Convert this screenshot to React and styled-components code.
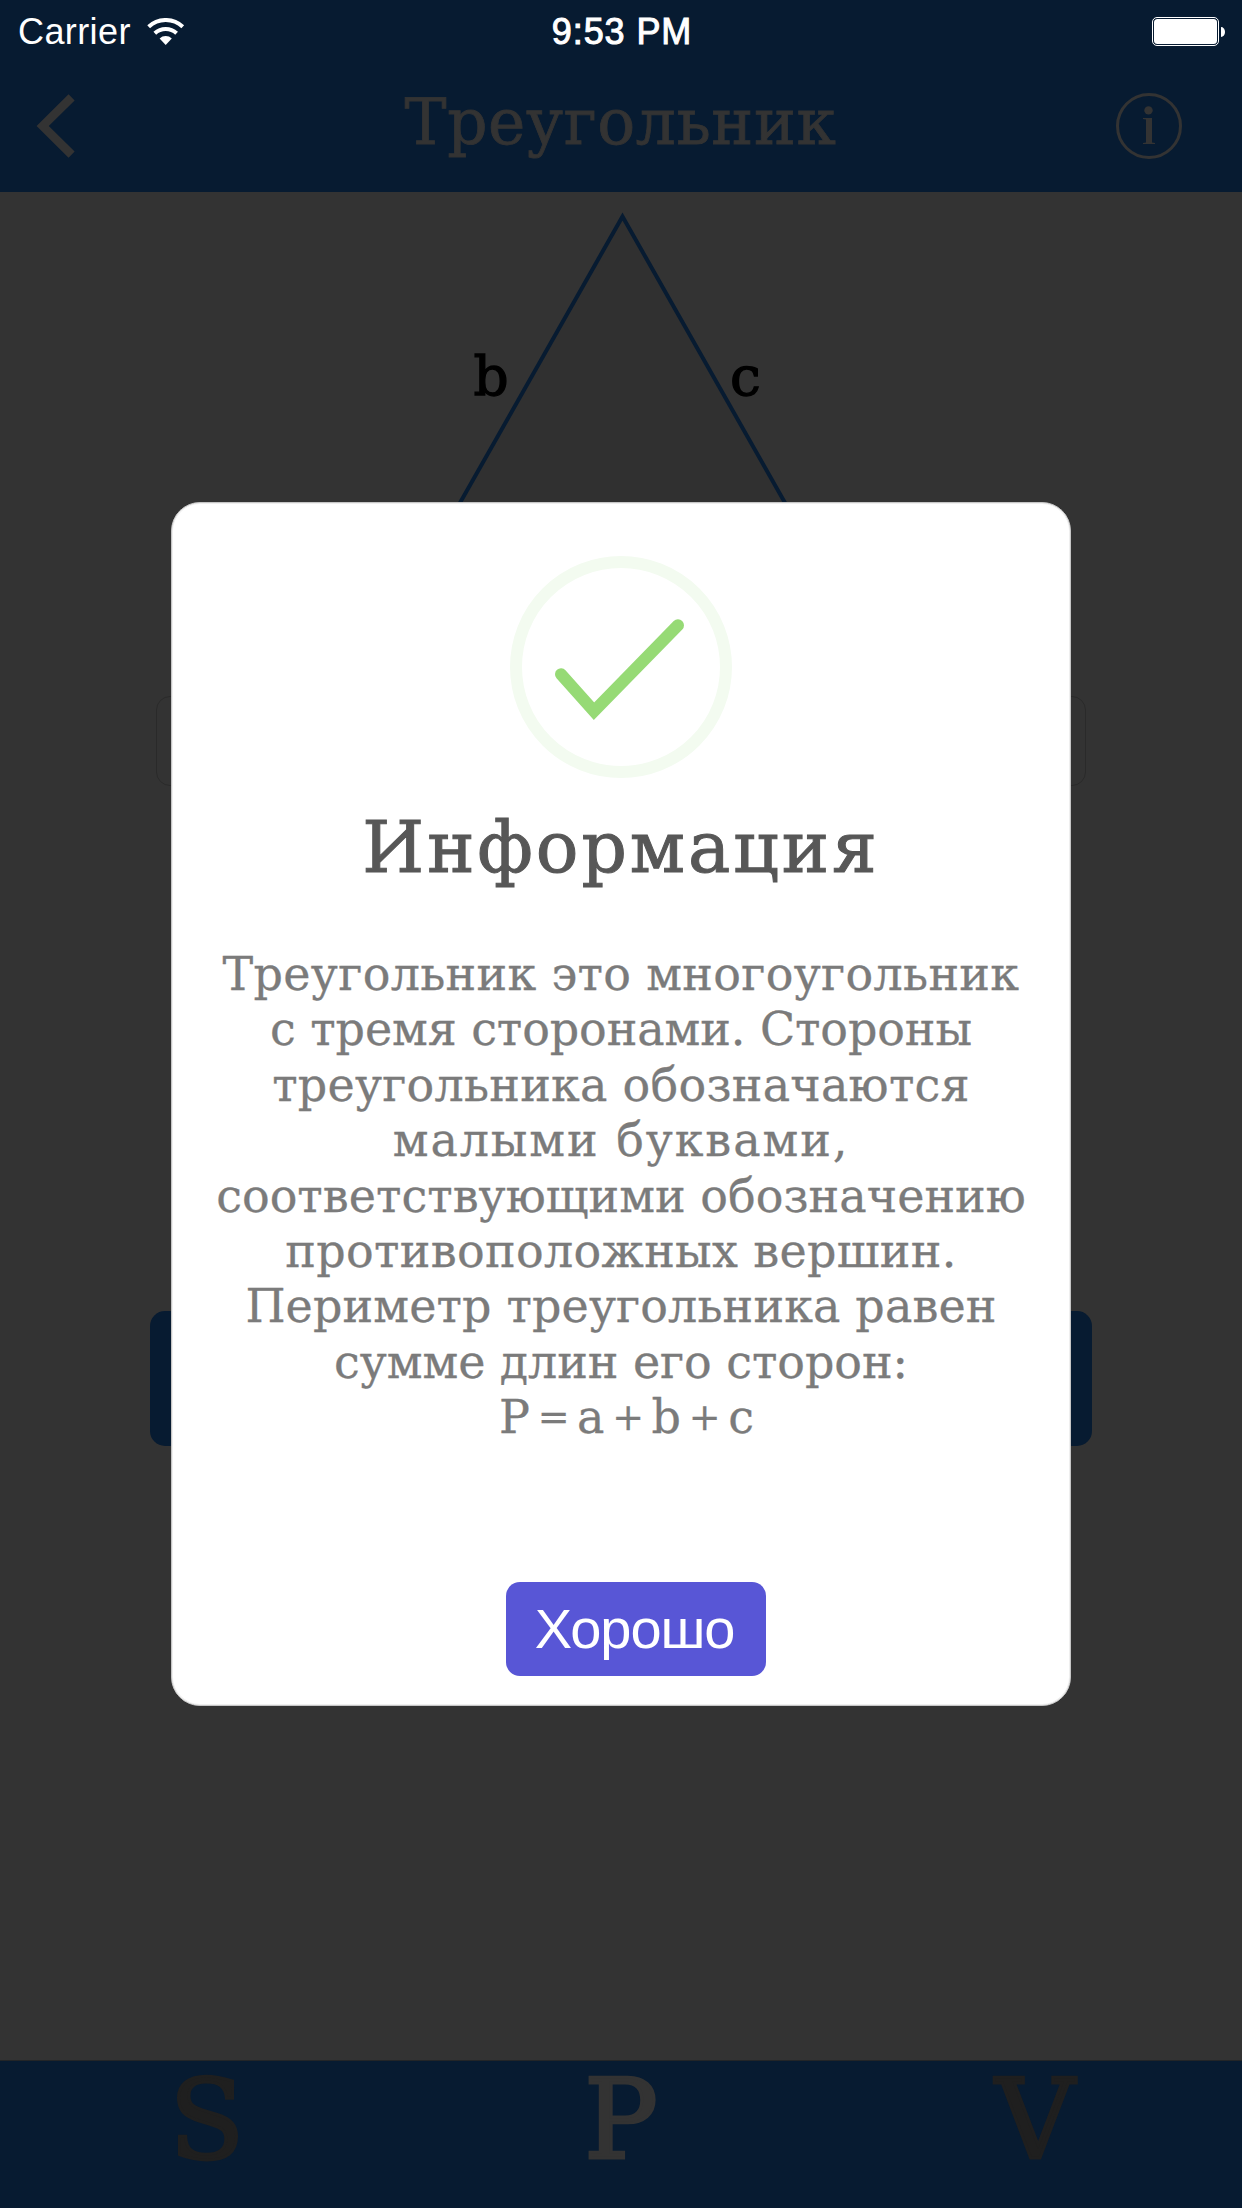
import React from 'react';
import styled, { createGlobalStyle } from 'styled-components';

const navy = '#071b31';
const ink = '#333333';
const serif = '"DejaVu Serif", serif';
const sans = '"Liberation Sans", Arial, sans-serif';

const GlobalStyle = createGlobalStyle`
  *, *::before, *::after { box-sizing: border-box; }
  body { margin: 0; background: ${ink}; }
`;

const Screen = styled.div`
  position: relative;
  display: flex;
  flex-direction: column;
  width: 1242px;
  height: 2208px;
  overflow: hidden;
  background: ${ink};
  font-family: ${serif};
`;

const Header = styled.header`
  flex: none;
  height: 192px;
  background: ${navy};
`;

const StatusBar = styled.div`
  display: grid;
  grid-template-columns: 1fr auto 1fr;
  align-items: center;
  height: 63px;
  padding: 0 17px 0 18px;
  color: #fff;
  font: 36px/63px ${sans};
`;

const StatusLeft = styled.div`
  display: flex;
  align-items: center;
  gap: 16px;
  letter-spacing: 0.4px;
`;

const Clock = styled.div`
  padding-left: 1px;
  letter-spacing: 0.9px;
  -webkit-text-stroke: 1px #fff;
`;

const StatusRight = styled.div`
  display: flex;
  justify-content: flex-end;
  svg { display: block; }
`;

const NavRow = styled.nav`
  display: grid;
  grid-template-columns: 1fr auto 1fr;
  align-items: center;
  height: 129px;
  padding: 0 58px 3px 33px;
`;

const IconButton = styled.button`
  justify-self: ${(p) => p.$side};
  padding: 0;
  border: 0;
  background: none;
  svg { display: block; }
`;

const NavTitle = styled.h1`
  margin: 0 0 7px 24px;
  color: ${ink};
  font: 400 63px/80px ${serif};
  letter-spacing: 0.6px;
  -webkit-text-stroke: 0.8px currentColor;
`;

const Content = styled.main`
  flex: 1;
  display: flex;
  flex-direction: column;
  align-items: center;
`;

const Figure = styled.svg`
  display: block;
  flex: none;
  width: 1242px;
  height: 504px;
`;

const Field = styled.div`
  width: 930px;
  height: 90px;
  border: 1px solid #2a2a2a;
  border-radius: 14px;
`;

const Calculate = styled.div`
  width: 942px;
  height: 135px;
  margin-top: 525px;
  border-radius: 15px;
  background: ${navy};
`;

const TabBar = styled.footer`
  flex: none;
  display: grid;
  grid-template-columns: repeat(3, 1fr);
  height: 148px;
  padding-top: 3px;
  border-top: 1px solid #232527;
  background: ${navy};
`;

const Tab = styled.div`
  color: ${(p) => (p.$active ? ink : '#1f1f1f')};
  -webkit-text-stroke: 3px currentColor;
  font: 110px/112px ${serif};
  text-align: center;
`;

const Overlay = styled.div`
  position: absolute;
  inset: 0;
  display: flex;
  align-items: center;
  justify-content: center;
`;

const Dialog = styled.section`
  display: flex;
  flex-direction: column;
  align-items: center;
  width: 900px;
  height: 1204px;
  padding-top: 53px;
  border: 1px solid #c6c6c6;
  border-radius: 29px;
  background: #fff;
  box-shadow: inset 0 0 0 1px #efefef;
`;

const DialogTitle = styled.h2`
  margin: 28px 0 57px;
  color: #575757;
  font: 400 71px/84px ${serif};
  letter-spacing: 2.9px;
  -webkit-text-stroke: 1px currentColor;
`;

const Message = styled.div`
  height: 498px;
  color: #7b7b7b;
  font: 46px/55.4px ${serif};
  -webkit-text-stroke: 0.3px currentColor;
  text-align: center;
`;

const Line = styled.div`
  white-space: pre;
  letter-spacing: ${(p) => p.$spacing}px;
`;

const Formula = styled.div`
  padding-left: 11px;
  word-spacing: -7px;
`;

const Operator = styled.span`
  font-size: 38px;
  line-height: 0;
  vertical-align: 3px;
`;

const Confirm = styled.button`
  width: 260px;
  height: 94px;
  margin: 137px 0 0 30px;
  padding: 0 3px 0 0;
  border: 0;
  border-radius: 14px;
  background: #5856d6;
  color: #fff;
  font: 56px/94px ${sans};
  letter-spacing: -1.1px;
`;

const Wifi = () => (
  <svg width="38" height="28" viewBox="0 0 38 28">
    <g transform="translate(18.7 27)">
      <path d="M-17.05-18.3A25 25 0 0 1 17.05-18.3M-10.9-11.7A16 16 0 0 1 10.9-11.7" fill="none" stroke="#fff" strokeWidth="4" />
      <path d="M0 0L-6.1-6.6A9 9 0 0 1 6.1-6.6Z" fill="#fff" />
    </g>
  </svg>
);

const Battery = () => (
  <svg width="73" height="29" viewBox="0 0 73 29">
    <rect x="0.5" y="0.5" width="66" height="28" rx="4.5" fill="none" stroke="#fff" />
    <rect x="2" y="2" width="63" height="25" rx="3.5" fill="#fff" />
    <path d="M69 10a4 5 0 0 1 0 10z" fill="#fff" />
  </svg>
);

const Chevron = () => (
  <svg width="44" height="68" viewBox="0 0 44 68">
    <path d="M38.6 5.4L9.7 34L38.6 62.6" fill="none" stroke={ink} strokeWidth="8.6" />
  </svg>
);

const Info = () => (
  <svg width="70" height="70" viewBox="-35 -35 70 70">
    <circle r="31.5" fill="none" stroke={ink} strokeWidth="3" />
    <circle cx="-0.5" cy="-15.6" r="4.2" fill={ink} />
    <path d="M-6-8H3V16.5L6 17V18H-6V17L-3 16.5V-6.5L-6-7Z" fill={ink} />
  </svg>
);

const Check = () => (
  <svg width="222" height="222" viewBox="0 0 222 222">
    <circle cx="111" cy="111" r="105" fill="none" stroke="#f3fbf0" strokeWidth="12" />
    <path d="M51 118.3L84 155.3L168 69.3" fill="none" stroke="#96da75" strokeWidth="12" strokeLinecap="round" />
  </svg>
);

const lines = [
  ['Треугольник это многоугольник', 0.31],
  ['с тремя сторонами. Стороны', -0.1],
  ['треугольника обозначаются', 0.24],
  ['малыми буквами,', 1.9],
  ['соответствующими обозначению', 0.02],
  ['противоположных вершин.', 0.31],
  ['Периметр треугольника равен', 0.12],
  ['сумме длин его сторон:', -0.08],
];

const tabs = ['S', 'P', 'V'];

export default function App() {
  return (
    <Screen>
      <GlobalStyle />
      <Header>
        <StatusBar>
          <StatusLeft>
            <span>Carrier</span>
            <Wifi />
          </StatusLeft>
          <Clock>9:53 PM</Clock>
          <StatusRight>
            <Battery />
          </StatusRight>
        </StatusBar>
        <NavRow>
          <IconButton $side="start"><Chevron /></IconButton>
          <NavTitle>Треугольник</NavTitle>
          <IconButton $side="end"><Info /></IconButton>
        </NavRow>
      </Header>
      <Content>
        <Figure viewBox="0 192 1242 504">
          <path d="M622.5 216.5L423 568H822Z" fill="#303030" stroke={navy} strokeWidth="4" />
          <g fontFamily={serif} fontSize="55" fill="#000" stroke="#000" strokeWidth="1.3">
            <text x="473.5" y="394.5">b</text>
            <text x="730" y="394.5">c</text>
          </g>
        </Figure>
        <Field />
        <Calculate />
      </Content>
      <TabBar>
        {tabs.map((t) => (
          <Tab key={t} $active={t === 'P'}>{t}</Tab>
        ))}
      </TabBar>
      <Overlay>
        <Dialog>
          <Check />
          <DialogTitle>Информация</DialogTitle>
          <Message>
            {lines.map(([text, spacing]) => (
              <Line key={text} $spacing={spacing}>{text}</Line>
            ))}
            <Formula>
              P <Operator>=</Operator> a <Operator>+</Operator> b <Operator>+</Operator> c
            </Formula>
          </Message>
          <Confirm>Хорошо</Confirm>
        </Dialog>
      </Overlay>
    </Screen>
  );
}
